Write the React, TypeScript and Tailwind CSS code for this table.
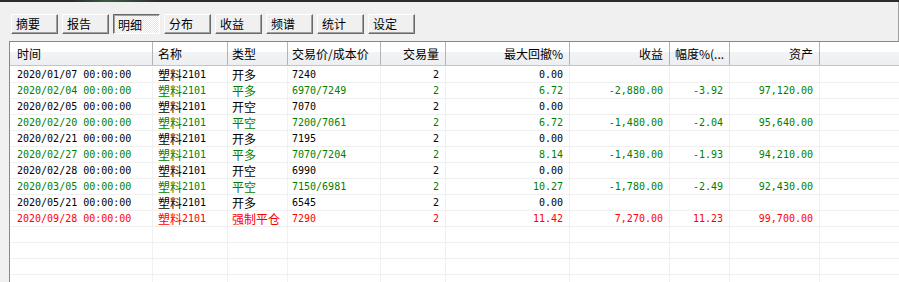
import React from "react";

type Align = "L" | "R";

const CJK = "font-['Noto_Sans_CJK_SC','Noto_Sans_CJK_JP',sans-serif] text-[12px]";
const MONO = "font-['DejaVu_Sans_Mono','Liberation_Mono',monospace] text-[10px]";

function Mixed({ s }: { s: string }) {
  const parts = s.split(/([\u4e00-\u9fff]+)/).filter((p) => p.length > 0);
  return (
    <>
      {parts.map((p, i) =>
        /[\u4e00-\u9fff]/.test(p) ? (
          <span key={i} className={CJK}>
            {p}
          </span>
        ) : (
          <span key={i} className={MONO}>
            {p}
          </span>
        )
      )}
    </>
  );
}

const widths = [
  "w-[143px]",
  "w-[75px]",
  "w-[60px]",
  "w-[93px]",
  "w-[65px]",
  "w-[124px]",
  "w-[100px]",
  "w-[60px]",
  "w-[90px]",
];

const headPad = [
  "pl-[7px] justify-start",
  "pl-[5px] justify-start",
  "pl-[4px] justify-start",
  "pl-[4px] justify-start",
  "pr-[6px] justify-end",
  "pr-[6px] justify-end",
  "pr-[6px] justify-end",
  "pl-[5px] justify-start",
  "pr-[6px] justify-end",
];

const dataPad = [
  "pl-[7px] justify-start",
  "pl-[5px] justify-start",
  "pl-[4px] justify-start",
  "pl-[4px] justify-start",
  "pr-[6px] justify-end",
  "pr-[6px] justify-end",
  "pr-[6px] justify-end",
  "pr-[6px] justify-end",
  "pr-[6px] justify-end",
];

const headers = ["时间", "名称", "类型", "交易价/成本价", "交易量", "最大回撤%", "收益", "幅度%(...", "资产"];

type Row = { c: "k" | "g" | "r"; v: string[] };

const rows: Row[] = [
  { c: "k", v: ["2020/01/07 00:00:00", "塑料2101", "开多", "7240", "2", "0.00", "", "", ""] },
  { c: "g", v: ["2020/02/04 00:00:00", "塑料2101", "平多", "6970/7249", "2", "6.72", "-2,880.00", "-3.92", "97,120.00"] },
  { c: "k", v: ["2020/02/05 00:00:00", "塑料2101", "开空", "7070", "2", "0.00", "", "", ""] },
  { c: "g", v: ["2020/02/20 00:00:00", "塑料2101", "平空", "7200/7061", "2", "6.72", "-1,480.00", "-2.04", "95,640.00"] },
  { c: "k", v: ["2020/02/21 00:00:00", "塑料2101", "开多", "7195", "2", "0.00", "", "", ""] },
  { c: "g", v: ["2020/02/27 00:00:00", "塑料2101", "平多", "7070/7204", "2", "8.14", "-1,430.00", "-1.93", "94,210.00"] },
  { c: "k", v: ["2020/02/28 00:00:00", "塑料2101", "开空", "6990", "2", "0.00", "", "", ""] },
  { c: "g", v: ["2020/03/05 00:00:00", "塑料2101", "平空", "7150/6981", "2", "10.27", "-1,780.00", "-2.49", "92,430.00"] },
  { c: "k", v: ["2020/05/21 00:00:00", "塑料2101", "开多", "6545", "2", "0.00", "", "", ""] },
  { c: "r", v: ["2020/09/28 00:00:00", "塑料2101", "强制平仓", "7290", "2", "11.42", "7,270.00", "11.23", "99,700.00"] },
];

const tabs = ["摘要", "报告", "明细", "分布", "收益", "频谱", "统计", "设定"];

function Tab({ label, active }: { label: string; active: boolean }) {
  if (active) {
    return (
      <div className="w-[47px] h-[20px] flex items-center pl-[4px] pt-[1px] border border-t-[#696969] border-l-[#696969] border-r-white border-b-white shadow-[inset_1px_1px_0_#a0a0a0] bg-[repeating-conic-gradient(#ffffff_0%_25%,#e6e6e6_0%_50%)] bg-[length:2px_2px]">
        <span className={CJK + " leading-[14px] text-black"}>{label}</span>
      </div>
    );
  }
  return (
    <div className="w-[47px] h-[20px] flex items-center pl-[4px] border border-t-white border-l-white border-r-[#696969] border-b-[#696969] shadow-[inset_-1px_-1px_0_#a0a0a0] bg-[#f0f0f0]">
      <span className={CJK + " leading-[14px] text-black"}>{label}</span>
    </div>
  );
}

export default function App() {
  const empty = [0, 1, 2, 3, 4];
  return (
    <div className="w-[899px] h-[282px] overflow-hidden bg-[#f0f0f0] flex flex-col">
      <div className="h-[2px] shrink-0 bg-[linear-gradient(to_right,#2b2b2b_0%,#2b2b2b_8%,#3d5a45_12%,#2b2b2b_18%,#2b2b2b_100%)]" />
      <div className="h-[39px] shrink-0 border-r border-[#a0a0a0] pt-[12px] pl-[11px] flex gap-[4px]">
        {tabs.map((t) => (
          <Tab key={t} label={t} active={t === "明细"} />
        ))}
      </div>
      <div className="ml-[9px] w-[900px] flex-1 shrink-0 bg-white border-l border-t border-[#828790] flex flex-col">
        <div className="h-[24px] shrink-0 flex border-b border-[#c5c5c5] bg-[linear-gradient(to_bottom,#ffffff_0%,#ffffff_42%,#f3f4f6_43%,#eceef1_100%)]">
          {headers.map((h, i) => (
            <div
              key={i}
              className={`${widths[i]} ${headPad[i]} h-full flex items-center border-r border-[#b4b4b4] text-black ${CJK} leading-[14px]`}
            >
              {h}
            </div>
          ))}
          <div className="flex-1" />
        </div>
        <div className="pt-[1px] flex flex-col">
          {rows.map((r, ri) => (
            <div
              key={ri}
              className={`h-[16px] flex border-b border-[#f0f0f0] ${
                r.c === "g" ? "text-[#008000]" : r.c === "r" ? "text-[#ff0000]" : "text-black"
              }`}
            >
              {r.v.map((v, i) => (
                <div
                  key={i}
                  className={`${widths[i]} ${dataPad[i]} h-full flex items-center whitespace-pre border-r border-[#f0f0f0] leading-[14px]`}
                >
                  <Mixed s={v} />
                </div>
              ))}
              <div className="flex-1" />
            </div>
          ))}
          {empty.map((e) => (
            <div key={"e" + e} className="h-[16px] flex border-b border-[#f0f0f0]">
              {widths.map((w, i) => (
                <div key={i} className={`${w} h-full border-r border-[#f0f0f0]`} />
              ))}
              <div className="flex-1" />
            </div>
          ))}
        </div>
      </div>
    </div>
  );
}
